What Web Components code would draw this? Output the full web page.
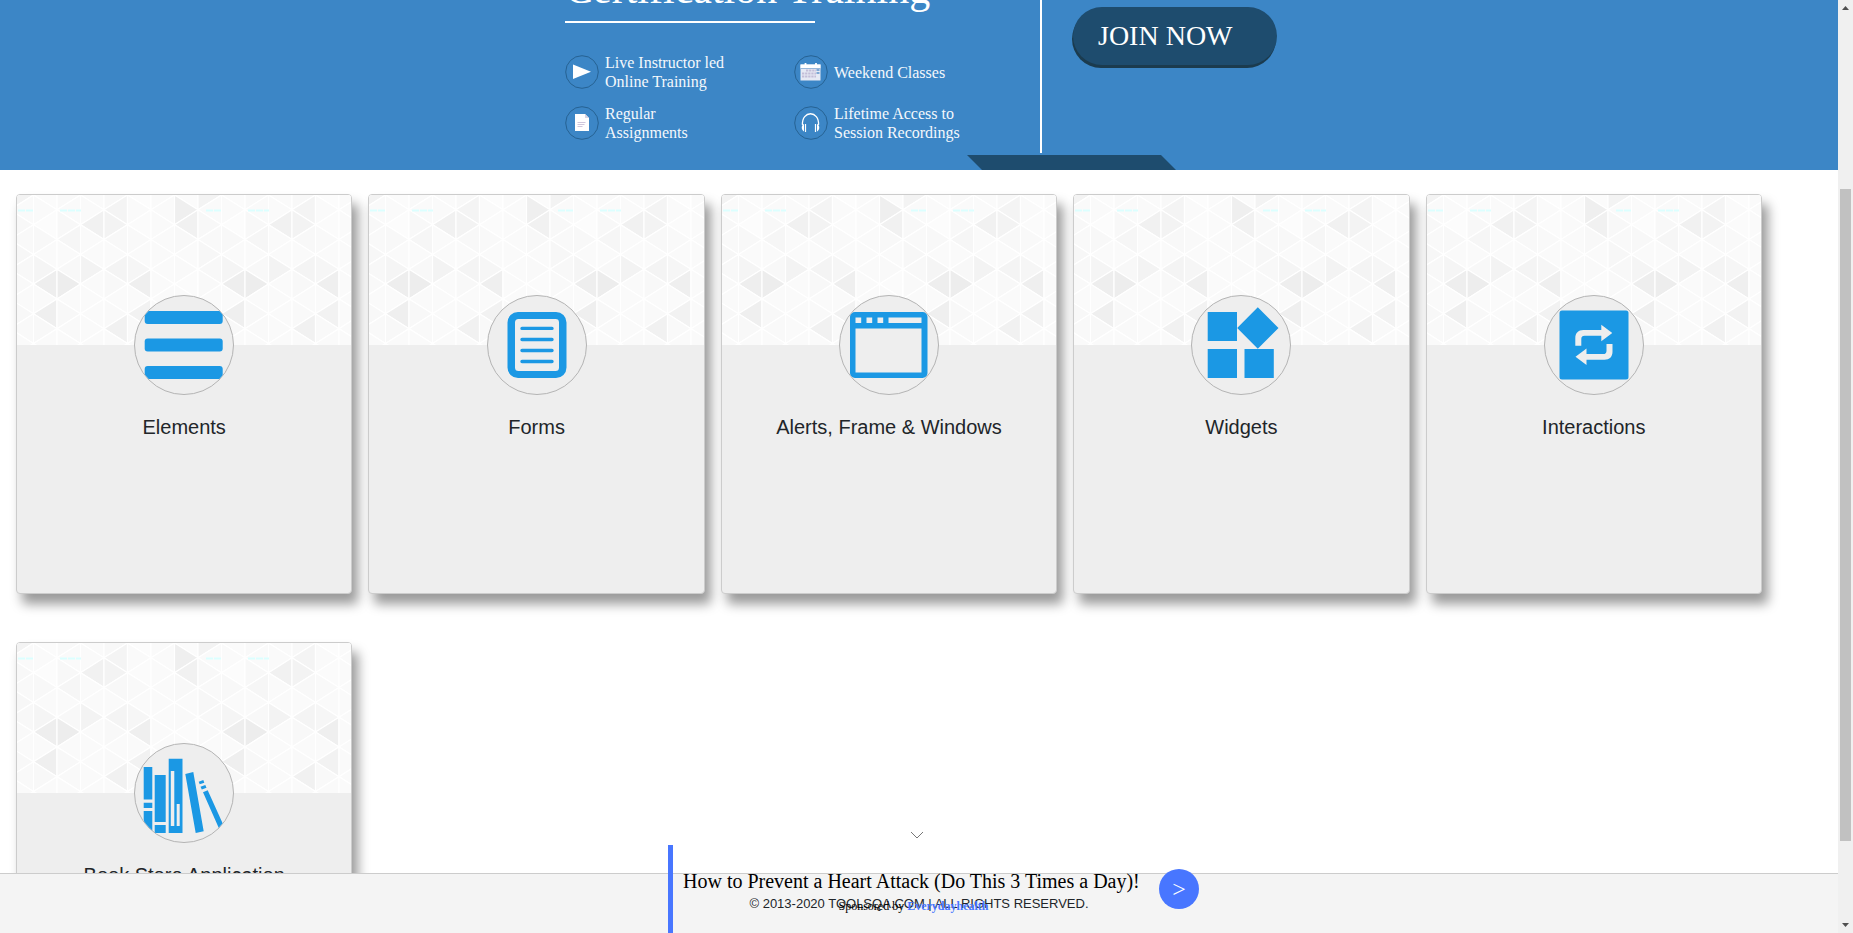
<!DOCTYPE html>
<html lang="en">
<head>
<meta charset="utf-8">
<title>ToolsQA</title>
<style>
html, body { margin: 0; height: 100%; overflow: hidden; background: #fff; }
body { font-family: "Liberation Sans", Arial, sans-serif; color: #212529; }
</style>
</head>
<body>
<qa-app></qa-app>
<script>
const define = (name, html, setup) => {
  const t = document.createElement('template');
  t.innerHTML = html;
  customElements.define(name, class extends HTMLElement {
    constructor() {
      super();
      this.attachShadow({ mode: 'open' }).append(t.content.cloneNode(true));
    }
    connectedCallback() { if (setup) setup(this, this.shadowRoot); }
  });
};

/* ---- banner ---- */
const glyphs = {
  play: '<path d="M8 9.500L26 16.700L8 24z" fill="#fff"/>',
  doc: '<path d="M10 8h10l4 4v13H10z" fill="#fff"/><path d="M20 8v4h4z" fill="#d8d5e4"/><path d="M12.500 16.500h8M12.500 18.500h7M12.500 20.500h5" stroke="#c9c0d8" stroke-width=".9"/>',
  calendar: '<path d="M6.500 9.500h20v16h-20z" fill="#e6e9f4"/><path d="M6.500 9.500h20v4h-20z" fill="#fff"/><path d="M6.500 13.500h20" stroke="#7fa6d0" stroke-width=".8"/><path d="M11.500 8v4M22 8v4" stroke="#fff" stroke-width="1.800"/><path d="M12 15.500h10M8 18.500h14M8 21.500h14" stroke="#c3bdd8" stroke-width="2.200" stroke-dasharray="2.300 .8"/><path d="M22.500 15h3M22.500 18h3" stroke="#5c93ca" stroke-width="1.600"/>',
  headphones: '<path d="M8.500 19c-1-15 17-15 16 0" fill="none" stroke="#fff" stroke-width="1.300"/><path d="M11.500 18v8M21.500 18v8" stroke="#fff" stroke-width="1.200"/><path d="M10 18c-3 1-3 6 0 7.500zM23 18c3 1 3 6 0 7.500z" fill="#fff"/>'
};
define('banner-feature', `
<style>
:host { display: flex; align-items: center; gap: 6px; font-size: 16px; line-height: 19px; min-height: 38px; color: #f4f8fc; }
svg { flex: none; display: block; width: 34px; height: 34px; }
</style>
<svg viewBox="0 0 34 34" aria-hidden="true"></svg><span><slot></slot></span>`,
(el, r) => {
  r.querySelector('svg').innerHTML = '<circle cx="17" cy="17" r="16.300" fill="none" stroke="#245d8c" stroke-width=".9"/>' + glyphs[el.getAttribute('icon')];
});

define('training-banner', `
<style>
:host { display: block; height: 170px; overflow: hidden; background: #3c86c6; color: #fff; font-family: "Liberation Serif", "Times New Roman", serif; position: relative; }
.inner { width: 716px; margin: 0 auto; padding-left: 4px; box-sizing: border-box; display: flex; height: 153px; }
.offer { flex: 1; }
h1 { margin: -35px 0 8px; font-weight: 400; font-size: 42px; line-height: 48px; white-space: nowrap; }
hr { margin: 0; border: 0; width: 250px; height: 2px; background: #fff; }
.features { display: grid; grid-template-columns: 229px auto; row-gap: 13px; margin-top: 30px; }
.join { border-left: 2px solid #fff; padding: 7px 0 0 31px; }
button { display: block; width: 204px; height: 58px; border: 0; border-radius: 29px; background: #1e4c6e; box-shadow: -1px 3px 0 #1b3b4e; color: #fff; font: 28px/58px "Liberation Serif", serif; text-align: left; padding: 0 25px 8px; }
.tab { position: absolute; bottom: 0; left: 967px; width: 210px; height: 15px; }
</style>
<div class="inner">
  <section class="offer">
    <h1>Certification Training</h1>
    <hr>
    <div class="features">
      <banner-feature icon="play">Live Instructor led<br>Online Training</banner-feature>
      <banner-feature icon="calendar">Weekend Classes</banner-feature>
      <banner-feature icon="doc">Regular<br>Assignments</banner-feature>
      <banner-feature icon="headphones">Lifetime Access to<br>Session Recordings</banner-feature>
    </div>
  </section>
  <div class="join"><button type="button">JOIN NOW</button></div>
</div>
<svg class="tab" viewBox="0 0 210 15" aria-hidden="true"><path d="M0 0h194l15 15H15z" fill="#1e4c6e"/></svg>`);

/* ---- triangle mosaic behind the card icons ---- */
const mosaic = () => {
  const W = 23.5, H = 29.7, x0 = 16.5;
  // strip:row:direction -> shade; row is the apex height in half edges
  const tone = {
    '7R0': '#f3f3f3', '3L1': '#f4f4f4', '2L2': '#f1f1f1', '3R2': '#f3f3f3',
    '6R1': '#efefef', '6L2': '#f1f1f1', '1L3': '#f6f6f6', '0R5': '#f5f5f5',
    '2R5': '#f3f3f3', '3L5': '#f4f4f4', '4R5': '#f6f6f6', '0L6': '#eeeeee',
    '1R6': '#ededed', '4L6': '#efefef', '0L8': '#efefef', '3L9': '#f1f1f1',
    '4L8': '#f2f2f2', '6L7': '#f7f7f7', '7R4': '#f7f7f7'
  };
  const soft = ['#fafafa', '#f9f9f9', '#fbfbfb', '#fafafa', '#fcfcfc', '#f8f8f8'];
  let out = '';
  for (let tile = -1; tile < 2; tile++) for (let k = 0; k < 8; k++) {
    const xl = x0 + (tile * 8 + k) * W, xr = xl + W;
    for (let h = -1; h < 12; h++) {
      const right = (h + k) % 2 === 0 ? 'L' : 'R';
      const y = h * H / 2, apex = right === 'R' ? xr : xl, base = right === 'R' ? xl : xr;
      const c = tone[k + right + h] || soft[(k * 5 + h * 7 + k * h + 20) % 6];
      out += `<path d="M${apex} ${y}L${base} ${y - H / 2}V${y + H / 2}z" fill="${c}"/>`;
    }
  }
  for (const x of [1, 189]) out += `<path d="M${x} 15.500h15M${x + 42} 15.500h21" stroke="#dcffff" stroke-width="1.800" stroke-dasharray="7 1"/>`;
  return out;
};
const mosaicMarkup = mosaic();

const swap = '<path d="M31.300 50.700V43c0-5 3-8 8-8h18v-5.300L68.300 38L57.300 46.300v-5.600H40.500c-2 0-3.200 1.200-3.200 3.200v6.800z"/>';
const icons = {
  elements: '<rect x="10.700" y="16" width="78" height="13" rx="3"/><rect x="10.700" y="43.500" width="78" height="13" rx="3"/><rect x="10.700" y="71" width="78" height="13" rx="3"/>',
  forms: '<path fill-rule="evenodd" d="M31 17h38a10.500 10.500 0 0 1 10.500 10.500v45A10.500 10.500 0 0 1 69 83H31a10.500 10.500 0 0 1-10.500-10.500v-45A10.500 10.500 0 0 1 31 17zM31.500 24a3.500 3.500 0 0 0-3.500 3.500v45a3.500 3.500 0 0 0 3.500 3.500h37a3.500 3.500 0 0 0 3.500-3.500v-45a3.500 3.500 0 0 0-3.500-3.500z"/><path d="M35 33.400h30M35 44.500h30M35 55.500h30M35 66.500h30" stroke="#1b98e4" stroke-width="3.400" stroke-linecap="round"/>',
  windows: '<path fill-rule="evenodd" d="M16 17h67.500a5 5 0 0 1 5 5v56a5 5 0 0 1-5 5H16a5 5 0 0 1-5-5V22a5 5 0 0 1 5-5zM16.500 33.500v44h66v-44zM16.500 22.500V28h5.700v-5.500zM27.500 22.500V28h5.700v-5.500zM38.500 22.500V28h5.700v-5.500zM49.500 22.500V28h33v-5.500z"/>',
  widgets: '<path d="M16.700 17H46v29H16.700zM16.700 54H46v29H16.700zM53.500 54h29.300v29H53.500zM66.800 12.300L87.500 33L66.800 53.700L46.200 33z"/>',
  interactions: `<rect x="15.500" y="15.500" width="69" height="69" rx="2.500"/><g fill="#eee">${swap}<g transform="rotate(180 49.900 49.900)">${swap}</g></g>`,
  books: '<path d="M9.700 24h8.600v32.500H9.700zM9.700 59.800h8.600V65H9.700zM9.700 68h8.600v22H9.700zM20.700 32h11v47h-11zM20.700 82h11v8h-11z"/><path fill-rule="evenodd" d="M34.700 15.700h13.800V90H34.700zM36.800 28v55h3.500V28zM42.700 61v22h3V61z"/><path d="M51.300 31l8-2l10.400 59.300l-8 1.700zM64.700 38.700l4.600-1.700l1 2.700l-4.600 1.600zM66.500 43.700l4.800-1.700l1.200 2.700l-4.700 1.700zM69 49.300l4.700-2L93 90h-6z"/>'
};

define('topic-card', `
<style>
:host { display: block; }
a { display: block; box-sizing: border-box; height: 400px; border: 1px solid #ccc; border-radius: 4px; background: #eee; box-shadow: 6px 10px 12px 0 rgba(0,0,0,.4); overflow: hidden; color: #212529; text-decoration: none; }
.cover { display: block; width: 100%; height: 150px; background: #fff; }
.badge { box-sizing: border-box; width: 100px; height: 100px; margin: -50px auto 20px; border: 1px solid #b4b4b4; border-radius: 50%; background: #eee; overflow: hidden; position: relative; }
.badge svg { width: 98px; height: 98px; fill: #1b98e4; display: block; }
h5 { margin: 0; font-weight: 400; font-size: 20px; line-height: 24px; text-align: center; }
</style>
<a href="#">
  <svg class="cover" aria-hidden="true"><g stroke="#fff" stroke-width="1.200"></g></svg>
  <div class="badge"><svg viewBox="1 1 98 98" aria-hidden="true"></svg></div>
  <h5><slot></slot></h5>
</a>`,
(el, r) => {
  r.querySelector('.cover g').innerHTML = mosaicMarkup;
  r.querySelector('.badge svg').innerHTML = icons[el.getAttribute('icon')];
});

define('topic-grid', `
<style>
:host { display: grid; grid-template-columns: repeat(5, 1fr); gap: 48px 16px; padding: 24px 76px 48px 16px; }
</style><slot></slot>`);

define('page-footer', `
<style>
:host { display: block; position: absolute; left: 0; right: 0; bottom: 0; height: 59px; border-top: 1px solid #ccc; background: #f4f4f4; text-align: center; font-size: 13px; line-height: 59px; }
</style><span><slot></slot></span>`);

define('sponsor-ad', `
<style>
:host { display: flex; flex-direction: column; align-items: center; position: absolute; bottom: 0; left: 50%; margin-left: -251px; width: 532px; font-family: "Liberation Serif", "Times New Roman", serif; color: #000; }
.fold { align-self: flex-start; margin: 0 0 6px 242px; border: 0; padding: 0; background: none; width: 14px; height: 8px; }
.fold svg { display: block; }
.row { box-sizing: border-box; width: 100%; height: 88px; border-left: 5px solid #4876ff; padding-left: 10px; display: flex; }
.copy { width: 456px; text-align: center; padding-top: 24px; }
.head { font-size: 20px; line-height: 24px; white-space: nowrap; }
.by { font-size: 12px; line-height: 16px; margin-top: 5px; padding-left: 5px; }
a { color: inherit; text-decoration: none; display: block; }
b { color: #4876ff; }
.go { margin: 24px 0 0 20px; width: 40px; height: 40px; border: 0; border-radius: 50%; background: #4876ff; color: #fff; font: 24px/40px "Liberation Serif", serif; padding: 0; text-align: center; }
</style>
<button class="fold" type="button" aria-label="Collapse"><svg width="14" height="8" viewBox="0 0 14 8"><path d="M1 1l6 6l6-6" fill="none" stroke="#777" stroke-width="1"/></svg></button>
<div class="row">
  <div class="copy">
    <a class="head" href="#">How to Prevent a Heart Attack (Do This 3 Times a Day)!</a>
    <a class="by" href="#">Sponsored by <b>Everydayhealth</b></a>
  </div>
  <button class="go" type="button">&gt;</button>
</div>`);

define('scroll-rail', `
<style>
:host { display: flex; flex-direction: column; align-items: center; justify-content: space-between; background: #f0f0f0; padding: 6px 0; box-sizing: border-box; }
.track { flex: 1; display: flex; flex-direction: column; width: 11px; margin: 7px 0; }
.track::before { content: ""; flex: 172; }
.thumb { flex: 652; background: #c1c1c1; }
.track::after { content: ""; flex: 75; }
svg { display: block; fill: #505050; }
</style>
<svg width="7" height="4" aria-hidden="true"><path d="M3.500 0L7 4H0z"/></svg>
<div class="track"><div class="thumb"></div></div>
<svg width="7" height="4" aria-hidden="true"><path d="M3.500 4L7 0H0z"/></svg>`);

define('qa-app', `
<style>
:host { display: grid; grid-template-columns: 1fr 15px; height: 100vh; }
.page { position: relative; overflow: hidden; min-width: 0; }
</style>
<div class="page">
  <training-banner></training-banner>
  <topic-grid>
    <topic-card icon="elements">Elements</topic-card>
    <topic-card icon="forms">Forms</topic-card>
    <topic-card icon="windows">Alerts, Frame &amp; Windows</topic-card>
    <topic-card icon="widgets">Widgets</topic-card>
    <topic-card icon="interactions">Interactions</topic-card>
    <topic-card icon="books">Book Store Application</topic-card>
  </topic-grid>
  <page-footer>© 2013-2020 TOOLSQA.COM | ALL RIGHTS RESERVED.</page-footer>
  <sponsor-ad></sponsor-ad>
</div>
<scroll-rail></scroll-rail>`);
</script>
</body>
</html>
